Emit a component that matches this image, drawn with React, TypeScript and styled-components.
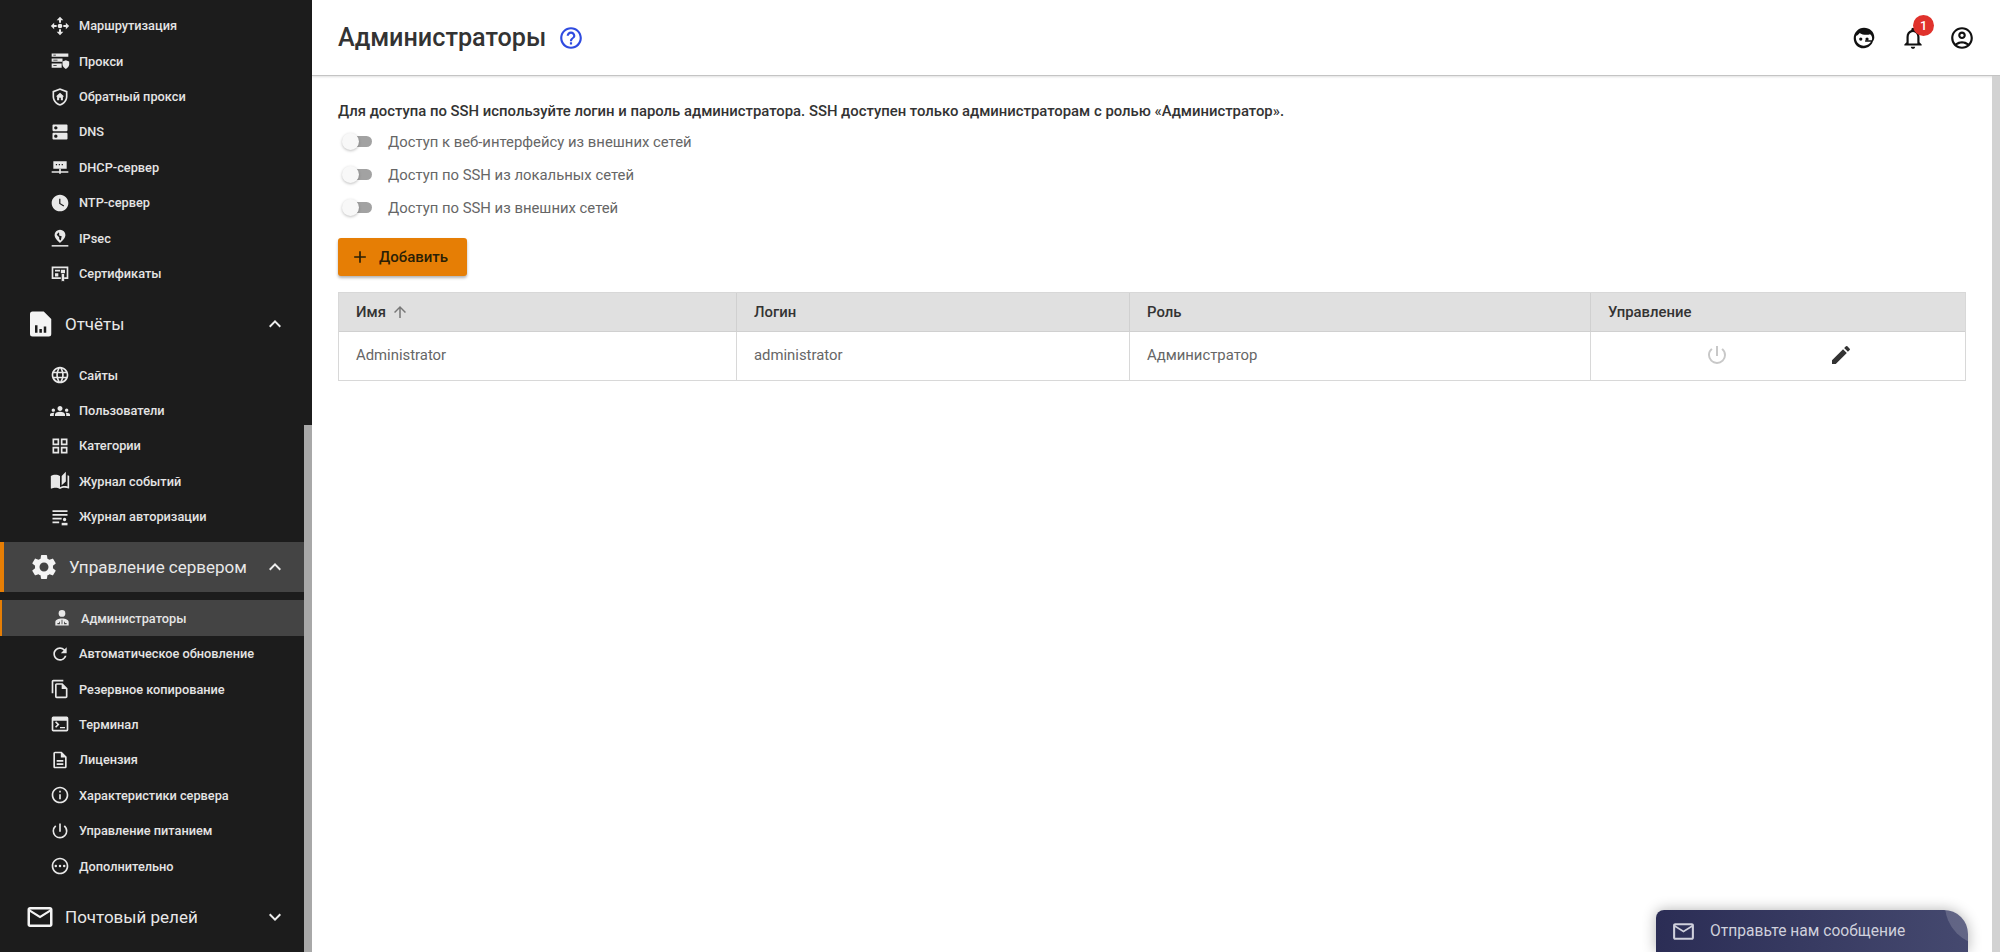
import React from "react";
import styled, { createGlobalStyle } from "styled-components";
import {
  MdAdd, MdArrowUpward, MdAutoStories, MdDns, MdEdit, MdExpandLess, MdExpandMore, MdHelpOutline,
  MdGroups, MdInfoOutline, MdLanguage, MdMailOutline, MdNotificationsNone, MdOutlineAccountCircle,
  MdOutlineDescription, MdOutlineFileCopy, MdOutlineGridView, MdOutlinePending, MdPowerSettingsNew,
  MdRefresh, MdSettings, MdWatchLater,
} from "react-icons/md";

const Global = createGlobalStyle`
  html, body { margin: 0; height: 100%; overflow: hidden; background: #fff; }
  body { font-family: Roboto, "Noto Sans", "Liberation Sans", sans-serif; }
  #root { height: 100%; }
`;

const Page = styled.div`display: flex; height: 952px; width: 2000px; overflow: hidden; position: relative;`;
const Sidebar = styled.aside`display: flex; width: 312px; flex: none; background: #1c1c1c; overflow: hidden;`;
const Nav = styled.nav`width: 304px; flex: none; padding-top: 8px;`;
const SideThumb = styled.div`width: 8px; margin-top: 425px; background: #a8a8a8;`;
const Item = styled.div<{ $active?: boolean }>`
  height: 35.43px; display: flex; align-items: center; color: #e4e4e4; font-size: 12.75px; font-weight: 500;
  padding-left: 50px;
  ${p => p.$active ? "background: #444; border-left: 2px solid #e67e05; padding-left: 50px;" : ""}
  svg { width: 20px; height: 20px; flex: none; margin-right: 9px; color: #e8e8e8; }
`;
const Section = styled.div<{ $active?: boolean }>`
  height: 50px; margin: 8px 0; display: flex; align-items: center; color: #e8e8e8; font-size: 17px; font-weight: 400;
  padding: 0 17px 0 25px;
  ${p => p.$active ? "background: #444; border-left: 4px solid #e67e05;" : ""}
  > svg:first-child { width: 30px; height: 30px; margin-right: 10px; color: #f4f4f4; flex: none; }
  > span { flex: 1; white-space: nowrap; }
  > svg:last-child { width: 24px; height: 24px; color: #eee; flex: none; }
`;
const Main = styled.main`flex: 1; display: flex; flex-direction: column; min-width: 0; background: #fff;`;
const Header = styled.header`
  height: 75px; flex: none; display: flex; align-items: center; padding: 0 26px; border-bottom: 1px solid #c4c4c4;
  box-shadow: 0 1px 2px rgba(0,0,0,.12); box-sizing: content-box;
`;
const Title = styled.h1`margin: 0; font-size: 25.2px; font-weight: 500; color: #333; line-height: 1;`;
const Help = styled(MdHelpOutline)`width: 26px; height: 26px; color: #2f4be0; margin-left: 12px;`;
const HeaderIcons = styled.div`margin-left: auto; display: flex; align-items: center; gap: 23px; margin-right: -1px;`;
const IconBox = styled.div`position: relative; width: 26px; height: 26px; color: #111; svg { width: 26px; height: 26px; display: block; }`;
const Badge = styled.span`
  position: absolute; top: -10px; left: 13px; width: 21px; height: 21px; border-radius: 50%; background: #e0322c; color: #fff;
  font-size: 12.75px; font-weight: 500; display: flex; align-items: center; justify-content: center;
`;
const Body = styled.div`flex: 1; display: flex; min-height: 0;`;
const Content = styled.div`flex: 1; padding: 26px 26px 0; min-width: 0;`;
const MainThumb = styled.div`width: 8px; background: #d2d2d2; flex: none;`;
const Notice = styled.p`margin: 0 0 5px; font-size: 14.875px; line-height: 18px; font-weight: 500; color: #333; white-space: nowrap;`;
const ToggleRow = styled.div`height: 33px; display: flex; align-items: center; color: #666; font-size: 14.875px;`;
const Switch = styled.span`
  position: relative; width: 28px; height: 11px; margin: 0 16px 0 6px; border-radius: 6px; background: #a2a2a2; flex: none;
  &::after {
    content: ""; position: absolute; left: -2px; top: -3px; width: 17px; height: 17px; border-radius: 50%; background: #f8f8f8;
    box-shadow: 0 1px 3px rgba(0,0,0,.25);
  }
`;
const AddButton = styled.button`
  margin-top: 14px; width: 129px; height: 38px; display: flex; align-items: center; padding: 0 0 0 12px; border: 0; border-radius: 3px;
  background: #e67e05; color: #2a2006; font: 500 15px Roboto, sans-serif; box-shadow: 0 2px 3px rgba(0,0,0,.3);
  svg { width: 20px; height: 20px; margin-right: 9px; }
`;
const Table = styled.div`
  margin-top: 16px; border: 1px solid #d8d8d8; display: grid; grid-template-columns: 397px 393px 461px 1fr; font-size: 14.875px;
`;
const HeadCell = styled.div`
  height: 38px; background: #e0e0e0; display: flex; align-items: center; padding-left: 17px; font-weight: 500; color: #333;
  border-bottom: 1px solid #d0d0d0; & + & { border-left: 1px solid #d0d0d0; }
  svg { width: 18px; height: 18px; margin-left: 5px; color: #777; }
`;
const Cell = styled.div`
  height: 48px; box-sizing: border-box; padding-bottom: 2px; display: flex; align-items: center; padding-left: 17px; color: #666;
  & + & { border-left: 1px solid #d8d8d8; }
`;
const Actions = styled(Cell)`padding-left: 114px; gap: 100px;`;
const PowerIcon = styled(MdPowerSettingsNew)`width: 24px; height: 24px; color: #c8c8c8;`;
const EditIcon = styled(MdEdit)`width: 24px; height: 24px; color: #333;`;
const ChatWrap = styled.div`position: absolute; right: 0; bottom: 0; width: 370px; height: 70px; overflow: hidden; pointer-events: none;`;
const Chat = styled.div`
  position: absolute; right: 32px; bottom: 0; width: 312px; height: 42px; display: flex; align-items: center; padding-left: 15px; box-sizing: border-box;
  border-radius: 8px 24px 0 0; background: linear-gradient(90deg, #2b2d55, #45496f); color: #cfd0dc; font-size: 15.6px;
  box-shadow: 0 0 14px rgba(0,0,0,.3);
  svg { width: 25px; height: 25px; margin-right: 14px; }
`;
const ChatCorner = styled.div`
  position: absolute; inset: 0; border-radius: inherit; overflow: hidden;
  &::after { content: ""; position: absolute; right: -57px; top: -45px; width: 80px; height: 80px; border-radius: 50%; background: rgba(255,255,255,.16); }
`;

const Svg: React.FC<{ children: React.ReactNode }> = ({ children }) => (
  <svg viewBox="0 0 24 24" fill="currentColor">{children}</svg>
);
const RouteIcon = () => <Svg><path d="M12 1l4 4h-2.800v3h-2.400V5H8zM12 23l-4-4h2.800v-3h2.400v3H16zM1 12l4-4v2.800h3v2.400H5V16zM23 12l-4 4v-2.800h-3v-2.400h3V8z" /><circle cx="12" cy="12" r="2.800" /></Svg>;
const ProxyIcon = () => <Svg><path d="M2 3h20v4H2zM2 9h13v4H2zM2 15h12v5H2z" /><path d="M19 11l4 1.500v3.500c0 2.500-1.700 4.500-4 5.500-2.300-1-4-3-4-5.500v-3.500z" /><path fill="#1c1c1c" d="M4 4.500h3v1H4zM4 10.500h5v1H4zM4 17h4v1H4z" /></Svg>;
const ShieldHomeIcon = () => <Svg><path fillRule="evenodd" d="M12 1.500l9 3.400v6.600c0 5.200-3.700 9.700-9 11-5.300-1.300-9-5.800-9-11V4.900zm0 2.100L5 6.300v5.200c0 4.100 2.800 7.600 7 8.900 4.200-1.300 7-4.800 7-8.900V6.300z" /><path d="M12 7l5 4.500h-1.500V16h-2.500v-3h-2v3H8.500v-4.500H7z" /></Svg>;
const DhcpIcon = () => <Svg><path fillRule="evenodd" d="M4 5h16v9H4zm3 3.500v1.500h1.500V8.500zm3.500 0v1.500H12V8.500zm3.500 0v1.500h1.500V8.500z" /><path d="M11 14h2v3h9v2H13v1h-2v-1H2v-2h9z" /></Svg>;
const IpsecIcon = () => <Svg><path fillRule="evenodd" d="M12 2a6.500 6.500 0 016.500 6.500c0 3.500-3.500 7-6.500 9.500-3-2.500-6.500-6-6.500-9.500A6.500 6.500 0 0112 2zm-2 3.500L8 8l3 3v2.500l2 1.500 1-5-3-1V6z" /><path d="M2 20.500h20v1.800H2z" /></Svg>;
const CertIcon = () => <Svg><path fillRule="evenodd" d="M2 3h20v15h-5v-2h3V5H4v11h9v2H2z" /><path d="M6 7h6v2H6zM6 11h4v4H6zM13 7h5v4h-5zM14 12h3v9l-1.500-1-1.500 1z" /></Svg>;
const ReportIcon = () => <Svg><path fillRule="evenodd" d="M6 2h9l6 6v12a2 2 0 01-2 2H6a2 2 0 01-2-2V4a2 2 0 012-2zm2 11v6h2v-6zm3.500 3v3h2v-3zm3.500-2v5h2v-5z" /></Svg>;
const AuthLogIcon = () => <Svg><path d="M3 4h18v2H3zM3 8.500h18v2H3zM3 13h11v2H3zM3 17.500h8v2H3z" /><circle cx="17.500" cy="15" r="2" /><path d="M14 19h7v3h-7z" /></Svg>;
const AdminIcon = () => <Svg><circle cx="12" cy="6.500" r="4" /><path fillRule="evenodd" d="M4 21v-4.500c0-2 3.500-4 8-4s8 2 8 4V21zm2.500-1.500h3v-3h-1v1.500h-2zm5-5.500v5.500h1V14zm3 5.500h3V18h-2v-1.500h-1z" /></Svg>;
const TerminalIcon = () => <Svg><path fillRule="evenodd" d="M4 3h16a2 2 0 012 2v14a2 2 0 01-2 2H4a2 2 0 01-2-2V5a2 2 0 012-2zm0 5v11h16V8z" /><path d="M6 10l1.400-1.400 4 4-4 4L6 15.200l2.600-2.600zM12 15.500h6v1.700h-6z" /></Svg>;
const FaceIcon = () => <Svg><path fillRule="evenodd" d="M12 2.500c5.200 0 9.500 3.800 9.500 8.700 0 1.500-.5 2.800-1.300 3.800-1 3.500-4.300 6.200-8.200 6.500-5.200.3-9.500-3.900-9.500-9.300 0-5.200 4.300-9.700 9.500-9.700zm5.200 6.200C14.500 9.500 10 9 8 7.300 7 8.700 6 9.600 4.800 10c-.2.500-.3 1.100-.3 1.700 0 4 3.300 7.600 7.500 7.400 2.800-.1 5.200-1.500 6.500-3.600H13v-1.500h6.200c.2-.6.300-1.100.3-1.800 0-1.100-.8-3.200-2.300-3.800z" /><circle cx="9" cy="13" r="1.500" /><circle cx="14.800" cy="13" r="1.500" /></Svg>;

type Row = { icon: React.ReactNode; text: string };
const net: Row[] = [
  { icon: <RouteIcon />, text: "Маршрутизация" },
  { icon: <ProxyIcon />, text: "Прокси" },
  { icon: <ShieldHomeIcon />, text: "Обратный прокси" },
  { icon: <MdDns />, text: "DNS" },
  { icon: <DhcpIcon />, text: "DHCP-сервер" },
  { icon: <MdWatchLater />, text: "NTP-сервер" },
  { icon: <IpsecIcon />, text: "IPsec" },
  { icon: <CertIcon />, text: "Сертификаты" },
];
const reports: Row[] = [
  { icon: <MdLanguage />, text: "Сайты" },
  { icon: <MdGroups />, text: "Пользователи" },
  { icon: <MdOutlineGridView />, text: "Категории" },
  { icon: <MdAutoStories />, text: "Журнал событий" },
  { icon: <AuthLogIcon />, text: "Журнал авторизации" },
];
const server: Row[] = [
  { icon: <MdRefresh />, text: "Автоматическое обновление" },
  { icon: <MdOutlineFileCopy />, text: "Резервное копирование" },
  { icon: <TerminalIcon />, text: "Терминал" },
  { icon: <MdOutlineDescription />, text: "Лицензия" },
  { icon: <MdInfoOutline />, text: "Характеристики сервера" },
  { icon: <MdPowerSettingsNew />, text: "Управление питанием" },
  { icon: <MdOutlinePending />, text: "Дополнительно" },
];
const toggles = ["Доступ к веб-интерфейсу из внешних сетей", "Доступ по SSH из локальных сетей", "Доступ по SSH из внешних сетей"];
const renderRows = (rows: Row[]) => rows.map(r => <Item key={r.text}>{r.icon}{r.text}</Item>);

export default function App() {
  return (
    <Page>
      <Global />
      <Sidebar>
        <Nav>
          {renderRows(net)}
          <Section><ReportIcon /><span>Отчёты</span><MdExpandLess /></Section>
          {renderRows(reports)}
          <Section $active><MdSettings /><span>Управление сервером</span><MdExpandLess /></Section>
          <Item $active><AdminIcon />Администраторы</Item>
          {renderRows(server)}
          <Section><MdMailOutline /><span>Почтовый релей</span><MdExpandMore /></Section>
        </Nav>
        <SideThumb />
      </Sidebar>
      <Main>
        <Header>
          <Title>Администраторы</Title>
          <Help />
          <HeaderIcons>
            <IconBox><FaceIcon /></IconBox>
            <IconBox><MdNotificationsNone /><Badge>1</Badge></IconBox>
            <IconBox><MdOutlineAccountCircle /></IconBox>
          </HeaderIcons>
        </Header>
        <Body>
          <Content>
            <Notice>Для доступа по SSH используйте логин и пароль администратора. SSH доступен только администраторам с ролью «Администратор».</Notice>
            {toggles.map(t => <ToggleRow key={t}><Switch />{t}</ToggleRow>)}
            <AddButton><MdAdd />Добавить</AddButton>
            <Table>
              <HeadCell>Имя<MdArrowUpward /></HeadCell>
              <HeadCell>Логин</HeadCell>
              <HeadCell>Роль</HeadCell>
              <HeadCell>Управление</HeadCell>
              <Cell>Administrator</Cell>
              <Cell>administrator</Cell>
              <Cell>Администратор</Cell>
              <Actions><PowerIcon /><EditIcon /></Actions>
            </Table>
          </Content>
          <MainThumb />
        </Body>
      </Main>
      <ChatWrap>
        <Chat><ChatCorner /><MdMailOutline />Отправьте нам сообщение</Chat>
      </ChatWrap>
    </Page>
  );
}
